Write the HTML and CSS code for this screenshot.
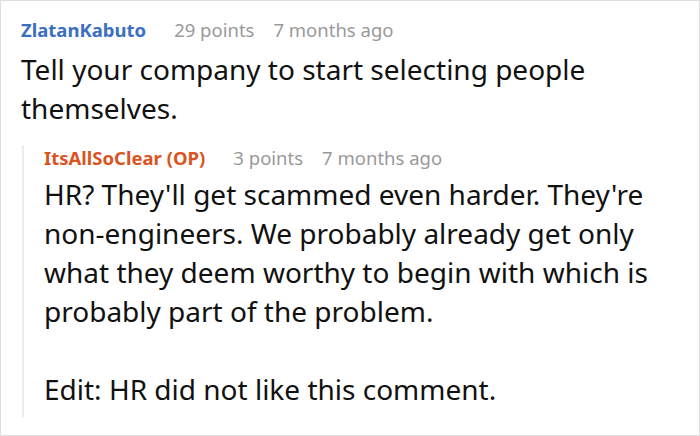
FILE: index.html
```html
<!DOCTYPE html>
<html lang="en">
<head>
<meta charset="utf-8">
<title>Comments</title>
<link rel="stylesheet" href="styles.css">
</head>
<body>
  <div class="thread">
    <div class="comment">
      <div class="meta">
        <span class="author">ZlatanKabuto</span>
        <span class="info">29 points</span>
        <span class="info">7 months ago</span>
      </div>
      <div class="body">
        <p>Tell your company to start selecting people themselves.</p>
      </div>
      <div class="reply">
        <div class="meta">
          <span class="author op">ItsAllSoClear (OP)</span>
          <span class="info">3 points</span>
          <span class="info">7 months ago</span>
        </div>
        <div class="body">
          <p>HR? They'll get scammed even harder. They're non-engineers. We probably already get only what they deem worthy to begin with which is probably part of the problem.</p>
          <p>Edit: HR did not like this comment.</p>
        </div>
      </div>
    </div>
  </div>
</body>
</html>
```

FILE: styles.css
```css
html, body {
  margin: 0;
  padding: 0;
  background: #fff;
}

body {
  font-family: "Noto Sans", "Open Sans", sans-serif;
  color: #111;
}

.thread {
  box-sizing: border-box;
  width: 700px;
  height: 436px;
  border: 1px solid #dedede;
  padding: 16px 14px 0 20px;
  overflow: hidden;
}

.meta {
  display: flex;
  font-size: 18.5px;
  line-height: 26px;
}

.author {
  font-weight: 700;
  color: #3d6fc0;
  margin-right: 28px;
}

.author.op {
  color: #d9541f;
}

.info {
  color: #999;
  margin-right: 19px;
}

.body {
  margin-top: 7px;
  font-size: 28px;
  line-height: 39px;
  hyphens: manual;
}

.body p {
  margin: 0;
}

.body p + p {
  margin-top: 39px;
}

.reply {
  margin: 23px 0 0 1px;
  border-left: 2px solid #ececec;
  padding: 0 0 8px 20px;
}

.reply .meta {
  margin-top: -6px;
}

.reply .body {
  margin-top: 4px;
}
```
